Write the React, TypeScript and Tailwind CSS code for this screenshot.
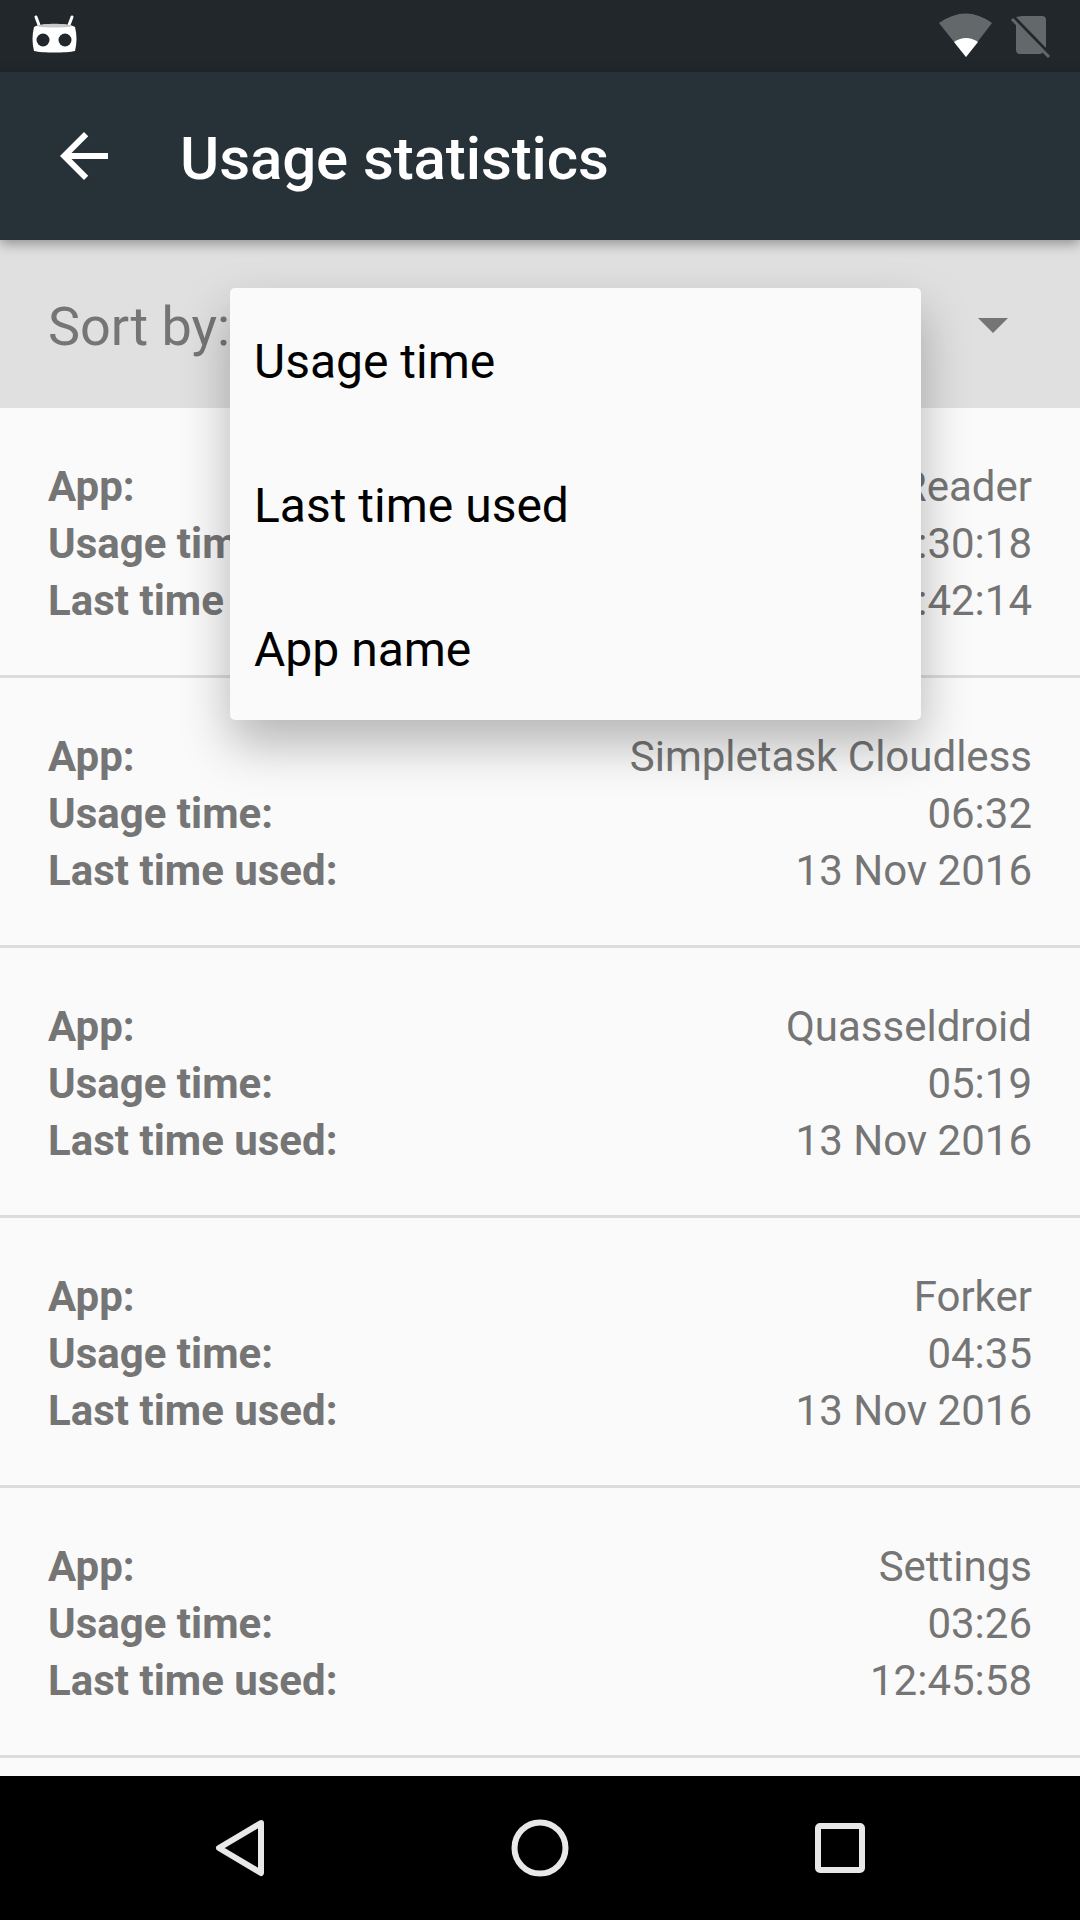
import React from "react";

interface IRow {
  app: string;
  usage: string;
  last: string;
}

const rows: IRow[] = [
  { app: "Feedly Reader", usage: "01:30:18", last: "13:42:14" },
  { app: "Simpletask Cloudless", usage: "06:32", last: "13 Nov 2016" },
  { app: "Quasseldroid", usage: "05:19", last: "13 Nov 2016" },
  { app: "Forker", usage: "04:35", last: "13 Nov 2016" },
  { app: "Settings", usage: "03:26", last: "12:45:58" },
];

const sortOptions = ["Usage time", "Last time used", "App name"];

const StatusBar = () => (
  <div className="flex h-[72px] shrink-0 items-center justify-between bg-[#21272b]">
    {/* CyanogenMod logo */}
    <svg width="120" height="72" viewBox="0 0 120 72">
      <path d="M36 17l3 8M72 17l-3 8" stroke="#fff" strokeWidth="3" strokeLinecap="round" />
      <path
        d="M34 27c6-4 35-4 41 0 2 8 2 16 0 24-8 2-33 2-41 0-2-8-2-16 0-24z"
        fill="#fff"
      />
      <path d="M36 26c8-3 29-3 37 0-8 2-29 2-37 0z" fill="#c8c8c8" />
      <circle cx="43" cy="40" r="6.5" fill="#21272b" />
      <circle cx="65" cy="40" r="6.5" fill="#21272b" />
    </svg>
    <svg width="160" height="72" viewBox="920 0 160 72">
      <path d="M939 23Q966 4 992 23L966 57z" fill="#63686a" />
      <path d="M954 42Q966 34 978 42L966 57z" fill="#fff" />
      <path
        d="M1022 16h20q4 0 4 4v28l-30-31zM1016 24l27 28q-1 2-3 2h-20q-4 0-4-4z"
        fill="#63686a"
      />
      <path d="M1012 19l37 38" stroke="#63686a" strokeWidth="3" />
    </svg>
  </div>
);

const Toolbar = () => (
  <div className="relative z-10 flex h-[168px] shrink-0 items-center bg-[#263238] pl-12 shadow-[0_4px_12px_rgba(0,0,0,0.35)]">
    <svg width="72" height="72" viewBox="0 0 24 24" fill="#fff">
      <path d="M20 11H7.83l5.59-5.59L12 4l-8 8 8 8 1.41-1.41L7.83 13H20v-2z" />
    </svg>
    <span className="ml-[60px] pt-[5px] text-[60px] font-medium tracking-[-0.1px] text-white">
      Usage statistics
    </span>
  </div>
);

const Row = ({ row }: { row: IRow }) => (
  <div className="flex h-[270px] shrink-0 flex-col justify-center border-b-[3px] border-[#dcdcdc] px-12 pt-[4px] text-[42px] leading-[57px] text-[#757575]">
    <div className="flex justify-between">
      <span className="font-bold">App:</span>
      <span>{row.app}</span>
    </div>
    <div className="flex justify-between">
      <span className="font-bold">Usage time:</span>
      <span>{row.usage}</span>
    </div>
    <div className="flex justify-between">
      <span className="font-bold">Last time used:</span>
      <span>{row.last}</span>
    </div>
  </div>
);

const NavBar = () => (
  <div className="z-10 flex h-[144px] shrink-0 items-center justify-center bg-black">
    <svg width="1080" height="144" viewBox="0 1776 1080 144" fill="none" stroke="#e8e8e8" strokeWidth="6" strokeLinejoin="round">
      <path d="M261 1823L219 1848L261 1873z" />
      <circle cx="540" cy="1848" r="25.5" />
      <rect x="818" y="1826" width="44" height="44" rx="2" />
    </svg>
  </div>
);

export default function App() {
  return (
    <div className="relative flex h-[1920px] w-[1080px] flex-col overflow-hidden bg-[#fafafa] font-['Roboto',sans-serif]">
      <StatusBar />
      <Toolbar />

      {/* Sort bar */}
      <div className="flex h-[168px] shrink-0 items-center justify-between bg-[#e0e0e0] pl-12 pr-[72px]">
        <span className="pt-[5px] text-[54px] text-[#757575]">Sort by:</span>
        <div className="mt-[2px] h-0 w-0 border-x-[15px] border-t-[15px] border-x-transparent border-t-[#757575]" />
      </div>

      {/* List */}
      <div className="flex min-h-0 flex-1 flex-col overflow-hidden">
        {rows.map((row) => (
          <Row key={row.app} row={row} />
        ))}
      </div>

      <NavBar />

      {/* Sort dropdown */}
      <div className="absolute left-[230px] top-[288px] z-20 flex w-[691px] flex-col rounded-[5px] bg-[#fafafa] shadow-[0_24px_50px_rgba(0,0,0,0.28)]">
        {sortOptions.map((option) => (
          <div key={option} className="flex h-[144px] items-center pl-6 pt-[3px] text-[48px] text-black">
            {option}
          </div>
        ))}
      </div>
    </div>
  );
}
